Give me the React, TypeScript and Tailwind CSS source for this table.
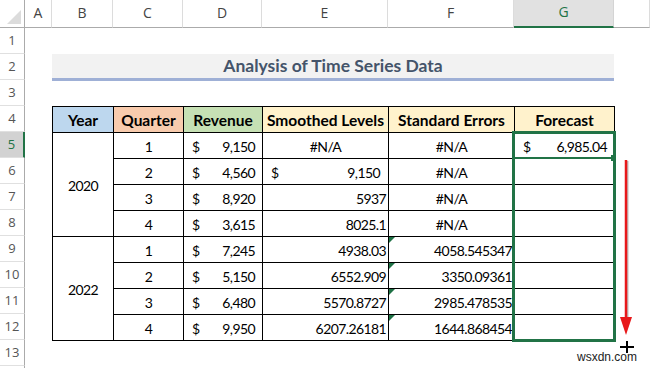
import React from "react";

type Cell = {
  text?: string;
  dollar?: boolean;
  align?: "left" | "center" | "right";
  pad?: string;
  flag?: boolean;
};

const colLetters = ["A", "B", "C", "D", "E", "F", "G", ""];

const headers = [
  { label: "Year", bg: "bg-[#bdd7ee]" },
  { label: "Quarter", bg: "bg-[#f8cbad]" },
  { label: "Revenue", bg: "bg-[#c6e0b4]" },
  { label: "Smoothed Levels", bg: "bg-[#fff2cc]" },
  { label: "Standard Errors", bg: "bg-[#fff2cc]" },
  { label: "Forecast", bg: "bg-[#fff2cc]" },
];

// quarter, revenue, smoothed, std error, forecast
const rows: Cell[][] = [
  [{ text: "1" }, { text: "9,150", dollar: true }, { text: "#N/A" }, { text: "#N/A" }, { text: "6,985.04", dollar: true }],
  [{ text: "2" }, { text: "4,560", dollar: true }, { text: "9,150", dollar: true, pad: "pr-[8px]" }, { text: "#N/A" }, {}],
  [{ text: "3" }, { text: "8,920", dollar: true }, { text: "5937", align: "right" }, { text: "#N/A" }, {}],
  [{ text: "4" }, { text: "3,615", dollar: true }, { text: "8025.1", align: "right" }, { text: "#N/A" }, {}],
  [{ text: "1" }, { text: "7,245", dollar: true }, { text: "4938.03", align: "right" }, { text: "4058.545347", align: "right", flag: true }, {}],
  [{ text: "2" }, { text: "5,150", dollar: true }, { text: "6552.909", align: "right" }, { text: "3350.09361", align: "right", flag: true }, {}],
  [{ text: "3" }, { text: "6,480", dollar: true }, { text: "5570.8727", align: "right" }, { text: "2985.478535", align: "right", flag: true }, {}],
  [{ text: "4" }, { text: "9,950", dollar: true }, { text: "6207.26181", align: "right" }, { text: "1644.868454", align: "right", flag: true }, {}],
];

function DataCell({ cell }: { cell: Cell }) {
  if (cell.dollar) {
    return (
      <div className={`bg-white flex items-center justify-between pt-[2px] pl-[8px] ${cell.pad ?? "pr-[7px]"}`}>
        <span>$</span>
        <span>{cell.text}</span>
      </div>
    );
  }
  const align =
    cell.align === "right" ? "justify-end pr-[2px]" : "justify-center";
  return (
    <div className={`relative bg-white flex items-center pt-[2px] ${align}`}>
      {cell.flag && (
        <svg className="absolute left-0 top-0" width="6" height="6" viewBox="0 0 6 6">
          <polygon points="0,0 6,0 0,6" fill="#1e7145" />
        </svg>
      )}
      {cell.text}
    </div>
  );
}

export default function App() {
  return (
    <div className="relative w-[650px] h-[368px] overflow-hidden bg-white text-black font-['Lato',sans-serif]">
      <div className="grid grid-cols-[25px_27px_61px_70px_79px_126px_126px_100px_36px] grid-rows-[28px_repeat(14,26px)]">
        {/* corner */}
        <div className="relative border-r border-b border-[#ababab] bg-white">
          <svg className="absolute right-[3px] bottom-[3px]" width="14" height="14" viewBox="0 0 14 14">
            <polygon points="14,0 14,14 0,14" fill="#dcdcdc" />
          </svg>
        </div>
        {/* column headers */}
        {colLetters.map((c, i) => (
          <div
            key={i}
            className={`flex items-end justify-center pb-[4px] text-[14px] font-['Open_Sans',sans-serif] ${
              c === "G"
                ? "bg-[#e1e1e1] text-[#217346] border-b-2 border-b-[#217346] border-r border-r-[#d4d4d4]"
                : "text-[#444] border-b border-b-[#ababab] border-r border-r-[#dcdcdc]"
            }`}
          >
            {c}
          </div>
        ))}

        {/* row headers */}
        {Array.from({ length: 14 }, (_, i) => i + 1).map((n) => (
          <div
            key={n}
            style={{ gridRowStart: n + 1 }}
            className={`col-start-1 flex items-center justify-center text-[13px] font-['Open_Sans',sans-serif] border-b border-b-[#e0e0e0] ${
              n === 5
                ? "bg-[#d2d2d2] text-[#217346] border-r-2 border-r-[#217346]"
                : "text-[#555] border-r border-r-[#ababab]"
            }`}
          >
            {n < 14 ? n : ""}
          </div>
        ))}

        {/* title */}
        <div className="col-start-3 col-span-6 row-start-3 self-start h-[27px] bg-[#f2f2f2] border-b-[3px] border-b-[#9fb0d6] flex items-center justify-center pt-[1px] text-[17.5px] font-bold text-[#44546a]">
          Analysis of Time Series Data
        </div>

        {/* table */}
        <div className="col-start-3 col-span-6 row-start-5 row-span-9 self-start w-[563px] h-[235px] grid grid-cols-[60px_69px_78px_125px_125px_99px] grid-rows-[repeat(9,25px)] gap-px p-px bg-black text-[14px] tracking-[-0.6px]">
          {headers.map((h) => (
            <div key={h.label} className={`${h.bg} flex items-center justify-center pt-[2px] font-bold text-[15.5px] tracking-normal`}>
              {h.label}
            </div>
          ))}
          {rows.map((r, i) => (
            <React.Fragment key={i}>
              {i % 4 === 0 && (
                <div className="col-start-1 row-span-4 bg-white flex items-center justify-center pt-[2px]">
                  {i === 0 ? "2020" : "2022"}
                </div>
              )}
              {r.map((cell, j) => (
                <DataCell key={j} cell={cell} />
              ))}
            </React.Fragment>
          ))}
        </div>
      </div>

      {/* selection range */}
      <div className="absolute left-[512px] top-[131px] w-[104px] h-[211px] border-[3px] border-[#217346]" />
      <div className="absolute left-[514px] top-[157px] w-[98px] h-[2px] bg-[#217346]" />
      <div className="absolute left-[611px] top-[155px] w-[5px] h-[6px] bg-[#217346]" />

      {/* drag arrow */}
      <svg className="absolute left-[614px] top-[155px]" width="26" height="190" viewBox="0 0 26 190">
        <line x1="13.5" y1="6" x2="13.5" y2="164" stroke="#bdbdbd" strokeWidth="2" />
        <line x1="12" y1="5" x2="12" y2="164" stroke="#e8191b" strokeWidth="2.5" />
        <polygon points="6,162 18,162 12,180" fill="#e8191b" />
      </svg>
      <svg className="absolute left-[620px] top-[341px]" width="14" height="12" viewBox="0 0 14 12">
        <line x1="7" y1="0" x2="7" y2="12" stroke="#000" strokeWidth="2" />
        <line x1="0" y1="6" x2="14" y2="6" stroke="#000" strokeWidth="2" />
      </svg>
      <div className="absolute left-[577px] top-[350px] text-[12px] leading-[14px] text-[#222] font-['Liberation_Sans',sans-serif]">
        wsxdn.com
      </div>
    </div>
  );
}
